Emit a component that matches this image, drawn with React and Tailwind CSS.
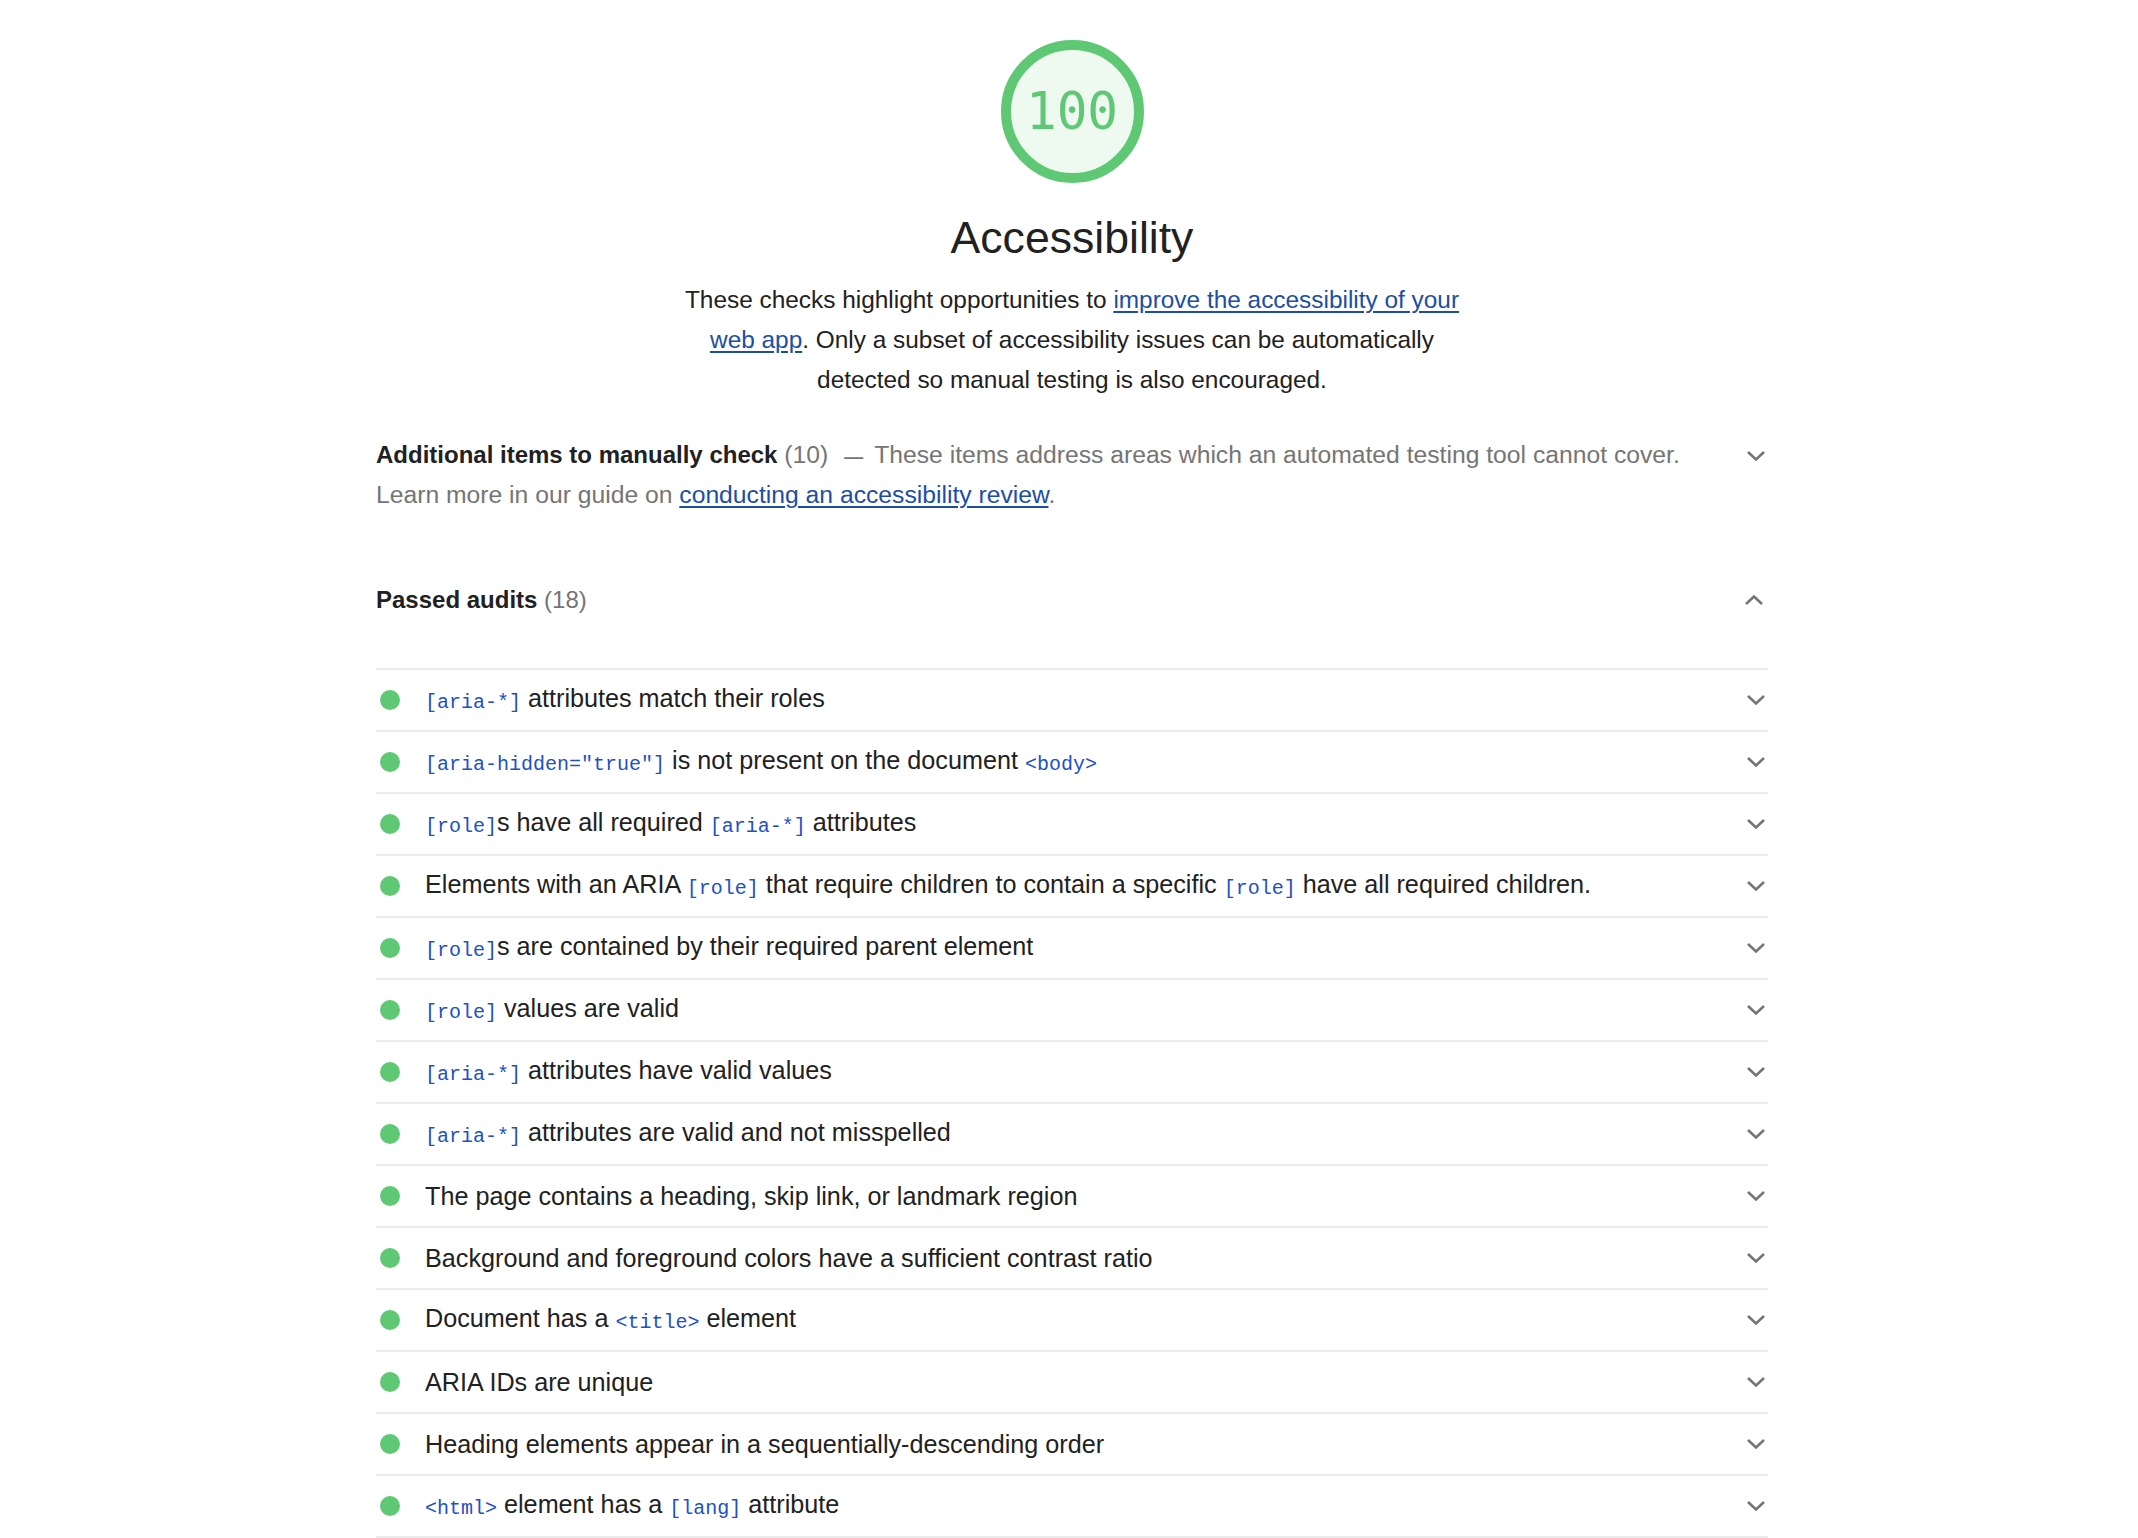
import React from 'react';

const audits = [
  [{ code: '[aria-*]' }, ' attributes match their roles'],
  [{ code: '[aria-hidden="true"]' }, ' is not present on the document ', { code: '<body>' }],
  [{ code: '[role]' }, 's have all required ', { code: '[aria-*]' }, ' attributes'],
  [
    'Elements with an ARIA ',
    { code: '[role]' },
    ' that require children to contain a specific ',
    { code: '[role]' },
    ' have all required children.',
  ],
  [{ code: '[role]' }, 's are contained by their required parent element'],
  [{ code: '[role]' }, ' values are valid'],
  [{ code: '[aria-*]' }, ' attributes have valid values'],
  [{ code: '[aria-*]' }, ' attributes are valid and not misspelled'],
  ['The page contains a heading, skip link, or landmark region'],
  ['Background and foreground colors have a sufficient contrast ratio'],
  ['Document has a ', { code: '<title>' }, ' element'],
  ['ARIA IDs are unique'],
  ['Heading elements appear in a sequentially-descending order'],
  [{ code: '<html>' }, ' element has a ', { code: '[lang]' }, ' attribute'],
];

const Code = ({ children }) => (
  <code className="font-['Liberation_Mono',monospace] text-[20px] text-[#2150c6] relative top-[1px]">
    {children}
  </code>
);

const Chevron = ({ up = false }) => (
  <svg
    width="20"
    height="12"
    viewBox="0 0 20 12"
    className={`shrink-0 ${up ? 'rotate-180' : ''}`}
    fill="none"
    stroke="#757575"
    strokeWidth="2.6"
  >
    <polyline points="2,2 10,9.5 18,2" />
  </svg>
);

const AuditRow = ({ parts }) => (
  <li className="flex items-center h-[62px] border-t-2 border-[#ebebeb]">
    <span className="ml-[4px] mr-[25px] w-[20px] h-[20px] rounded-full bg-[#5fc874] shrink-0" />
    <div className="flex-1 text-[25.2px] leading-[30px] text-[#212121]">
      {parts.map((p, i) =>
        typeof p === 'string' ? <span key={i}>{p}</span> : <Code key={i}>{p.code}</Code>
      )}
    </div>
    <span className="mr-[2px]">
      <Chevron />
    </span>
  </li>
);

const App = () => {
  return (
    <div className="min-h-screen bg-white font-['Liberation_Sans',Arial,sans-serif] text-[#212121] flex justify-center pl-[6px]">
      <div className="w-[1392px] pt-[40px]">
        <div className="flex flex-col items-center">
          <div className="w-[143px] h-[143px] rounded-full border-[10px] border-[#5fc874] bg-[#eef9f0] flex items-center justify-center">
            <span className="font-['DejaVu_Sans_Mono',monospace] text-[51px] leading-none text-[#5fc874]">
              100
            </span>
          </div>
          <h1 className="mt-[29px] text-[44.6px] leading-[52px] font-normal text-[#212121]">Accessibility</h1>
          <p className="mt-[16px] max-w-[800px] text-center text-[24.4px] leading-[40px] text-[#212121]">
            These checks highlight opportunities to{' '}
            <a href="#" className="text-[#1c4ea6] underline underline-offset-[3px]">
              improve the accessibility of your web app
            </a>
            . Only a subset of accessibility issues can be automatically detected so manual testing is also
            encouraged.
          </p>
        </div>

        <div className="mt-[35px] flex items-start">
          <div className="flex-1 pr-[20px] text-[24.7px] leading-[40px] text-[#757575]">
            <span className="font-bold text-[24px] text-[#212121]">Additional items to manually check</span> (10)
            <span className="ml-[16px] mr-[11px] text-[19px] font-bold leading-none">—</span>
            These items address areas which an automated testing tool cannot cover. Learn more in our guide on{' '}
            <a href="#" className="text-[#1c4ea6] underline underline-offset-[3px]">
              conducting an accessibility review
            </a>
            .
          </div>
          <span className="mt-[15px] mr-[2px]">
            <Chevron />
          </span>
        </div>

        <div className="mt-[65px] flex items-center justify-between h-[40px]">
          <div className="text-[24px] leading-[40px]">
            <span className="font-bold text-[#212121]">Passed audits</span>{' '}
            <span className="text-[#757575]">(18)</span>
          </div>
          <span className="mr-[4px]">
            <Chevron up />
          </span>
        </div>

        <ul className="mt-[48px] border-b-2 border-[#ebebeb]">
          {audits.map((parts, i) => (
            <AuditRow key={i} parts={parts} />
          ))}
        </ul>
      </div>
    </div>
  );
};

export default App;
